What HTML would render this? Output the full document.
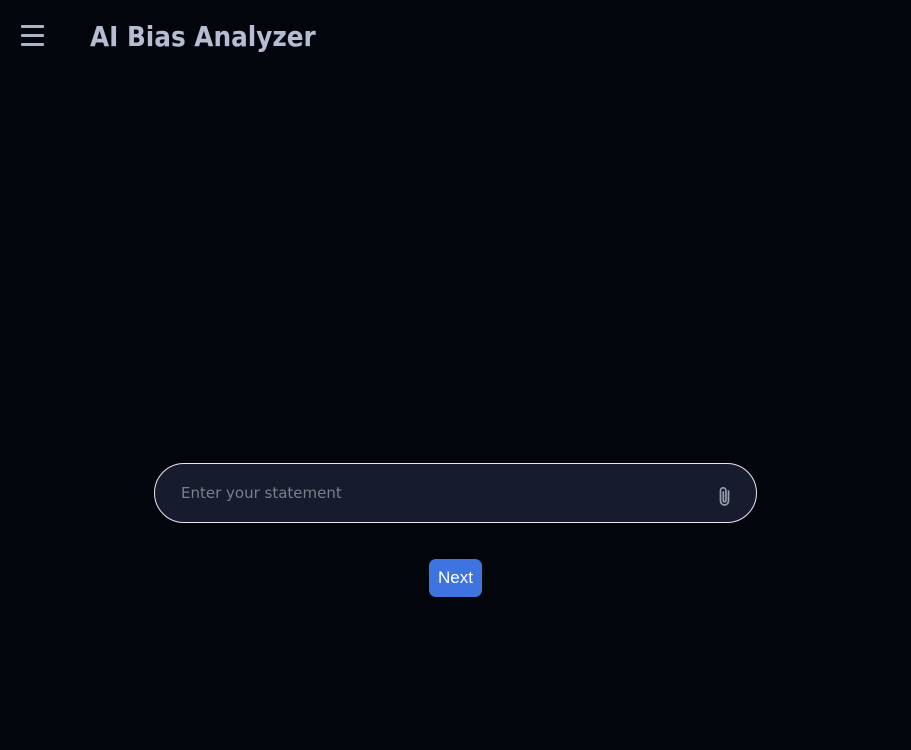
<!DOCTYPE html>
<html><head><style>
html,body{margin:0;padding:0;width:911px;height:750px;background:#03050d;overflow:hidden}
.menu{position:absolute;left:21px;top:25px;width:23px}
.menu div{height:3px;background:#a9b3c9;margin-bottom:6px;border-radius:1px}
.title{position:absolute;left:90px;top:21px;font:bold 27.5px "DejaVu Sans Condensed","Liberation Sans",sans-serif;color:#b4bdd2;letter-spacing:0px}
.box{position:absolute;left:154px;top:463px;width:601px;height:58px;border:1px solid #e8e8ee;border-radius:30px;background:#161c2d}
.ph{position:absolute;left:26px;top:20px;font:15px "DejaVu Sans",sans-serif;color:#7b7f8a}
.clip{position:absolute;left:561px;top:21px}
.btn{position:absolute;left:429px;top:559px;width:53px;height:38px;background:#3d74e0;border-radius:7px;color:#fff;font:17px "Liberation Sans",sans-serif;text-align:center;line-height:38px}
</style></head><body>
<div class="menu"><div></div><div></div><div></div></div>
<div class="title">AI Bias Analyzer</div>
<div class="box"><div class="ph">Enter your statement</div>
<svg class="clip" width="18" height="24" viewBox="0 0 18 24"><path d="M12.5 6v10a4 4 0 0 1-8 0V5.5a2.7 2.7 0 0 1 5.4 0v10a1.3 1.3 0 0 1-2.6 0V7" fill="none" stroke="#9aa0ab" stroke-width="1.7" stroke-linecap="round"/></svg>
</div>
<div class="btn">Next</div>
</body></html>
